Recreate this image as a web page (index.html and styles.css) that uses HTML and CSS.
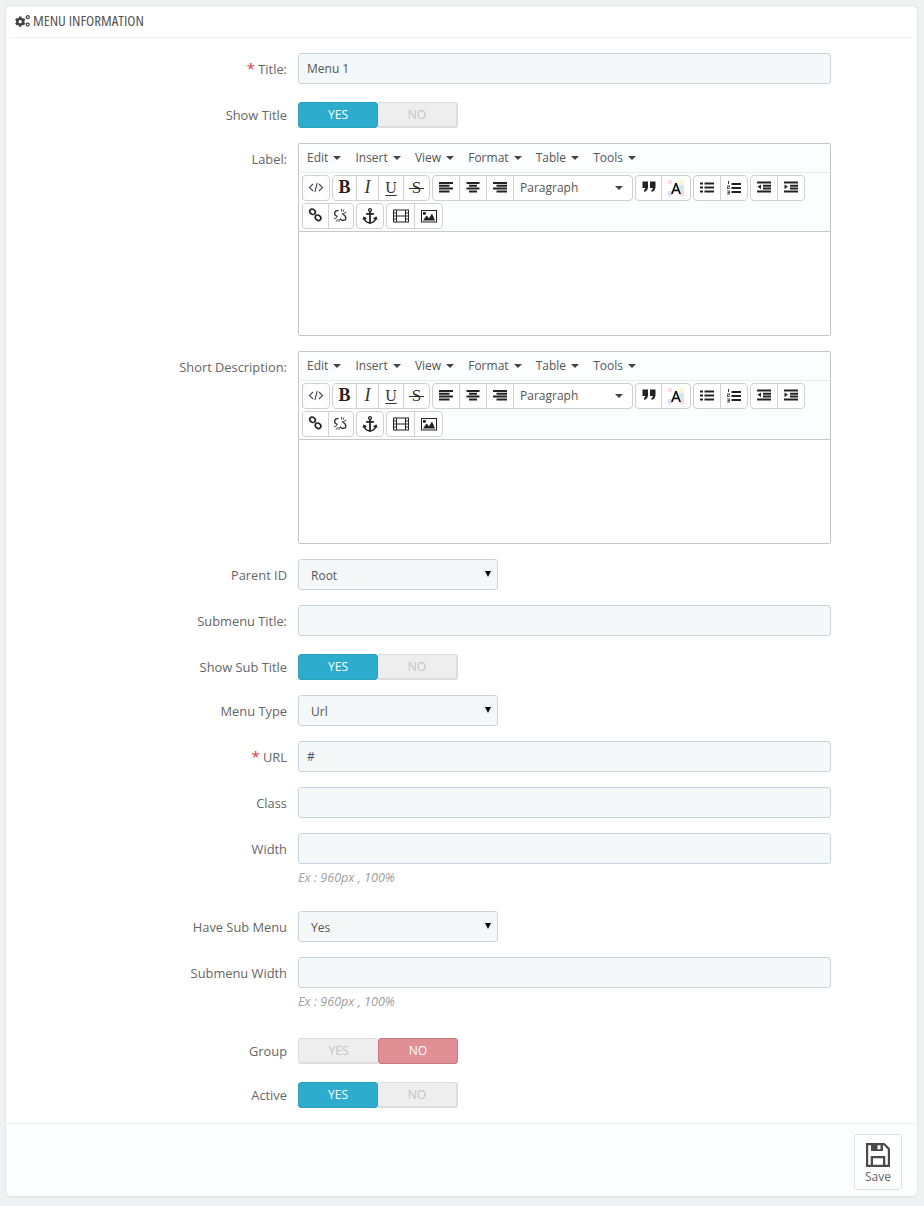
FILE: index.html
```html
<!DOCTYPE html>
<html lang="en">
<head>
<meta charset="utf-8">
<title>Menu Information</title>
<link rel="stylesheet" href="styles.css">
</head>
<body>
<svg class="defs" width="0" height="0" aria-hidden="true">
  <defs>
    <symbol id="i-code" viewBox="0 0 16 16"><path d="M5 4.500 1.500 8 5 11.500M11 4.500 14.500 8 11 11.500M9.200 3.500 6.800 12.500" transform="translate(0 -.5)" fill="none" stroke="#445" stroke-width="1.100"/></symbol>
    <symbol id="i-left" viewBox="0 0 16 16"><path d="M1 2h14v2H1zM1 4.800h10.500v2H1zM1 7.600h14v2H1zM1 10.400h10.500v2H1z" fill="#222"/></symbol>
    <symbol id="i-center" viewBox="0 0 16 16"><path d="M1.500 2h13v2h-13zM4 4.800h8v2H4zM1.500 7.600h13v2h-13zM4 10.400h8v2H4z" fill="#222"/></symbol>
    <symbol id="i-right" viewBox="0 0 16 16"><path d="M1 2h14v2H1zM4.500 4.800H15v2H4.500zM1 7.600h14v2H1zM4.500 10.400H15v2H4.500z" fill="#222"/></symbol>
    <symbol id="i-quote" viewBox="0 0 16 16"><path d="M1.500 1.500h5.500v5.500c0 2.500-1.300 4.300-4 5V9.800c.9-.2 1.300-.9 1.300-1.900H1.500zM9 1.500h5.500v5.500c0 2.500-1.300 4.300-4 5V9.800c.9-.2 1.300-.9 1.300-1.900H9z" fill="#222"/></symbol>
    <symbol id="i-color" viewBox="0 0 16 16"><path d="M0 0h4v4H0z" fill="#fbe0d8"/><path d="M11 0h5v5h-5z" fill="#fdf6c8"/><path d="M11 5h5v6h-5z" fill="#cfe9f8"/><path d="M0 11h4v5H0z" fill="#d4e4f8"/><path d="M11 11h5v5h-5z" fill="#fbd7e3"/><path d="M7.200 3h1.600L13 14h-1.800l-1-2.700H5.800L4.800 14H3z" fill="#111"/><path d="M6.300 9.800h3.400L8 5.300z" fill="#bfe8c8"/></symbol>
    <symbol id="i-ul" viewBox="0 0 16 16"><path d="M5.500 2.500H15v2H5.500zM5.500 6.500H15v2H5.500zM5.500 10.500H15v2H5.500zM1 2.500h3v2H1zM1 6.500h3v2H1zM1 10.500h3v2H1z" fill="#222"/></symbol>
    <symbol id="i-ol" viewBox="0 0 16 16"><path d="M5.500 3H15v2H5.500zM5.500 7H15v2H5.500zM5.500 11H15v2H5.500z" fill="#222"/><path d="M2 1h1v3H2zM1 5.500h2.800V7.300H2v.7h1.800v.8H1V6.700h1.800v-.4H1zM1 10.500h2.800v4H1v-.8h1.800v-.8H1.500v-.8h1.300v-.8H1z" fill="#333"/></symbol>
    <symbol id="i-out" viewBox="0 0 16 16"><path d="M1 1.500h14v2H1zM7 4.700h8v2H7zM7 7.500h8v2H7zM1 10.500h14v2H1zM5 4.500v4.500L1.500 6.800z" fill="#222"/></symbol>
    <symbol id="i-in" viewBox="0 0 16 16"><path d="M1 1.500h14v2H1zM7 4.700h8v2H7zM7 7.500h8v2H7zM1 10.500h14v2H1zM1.500 4.500v4.500L5 6.800z" fill="#222"/></symbol>
    <symbol id="i-link" viewBox="0 0 16 16"><g fill="none" stroke="#222" stroke-width="1.700"><ellipse cx="4.500" cy="3.800" rx="3" ry="2.500" transform="rotate(40 4.500 3.800)"/><ellipse cx="10" cy="9.800" rx="3" ry="2.500" transform="rotate(40 10 9.800)"/></g></symbol>
    <symbol id="i-unlink" viewBox="0 0 16 16"><g fill="none" stroke="#333"><path stroke-width="1.400" d="M5.500 2.500 2.800 2.800 1.500 5l.7 2 2.300 1.700M9 5.500l2.700 2 1.300 2.300-.8 2.200-2.700.5-2.800-1.700"/><path stroke-width=".900" d="M8.500 1v2.500M11 1.500 10 3.800M13.500 4l-3 1.500M6 14v-2.500M3.500 13.500l1-2.300M1 11l3-1.500"/></g></symbol>
    <symbol id="i-anchor" viewBox="0 0 16 16"><path fill-rule="evenodd" d="M8 0a2 2 0 0 1 .9 3.800V5h3v1.700h-3V14c1.800-.2 3-1.200 3.600-2.800L11 10.300l3.500-2 1 4-1.300-.7C13 14 10.800 15.500 8 16c-2.800-.5-5-2-6.200-4.400l-1.300.7 1-4L5 10.300l-1.500.9C4.100 12.800 5.300 13.800 7.100 14V6.700h-3V5h3V3.800A2 2 0 0 1 8 0zm0 1.300a.8.800 0 1 0 0 1.600.8.800 0 0 0 0-1.600z" fill="#222"/></symbol>
    <symbol id="i-film" viewBox="0 0 16 16"><path fill-rule="evenodd" d="M0 1.500h16v13H0zM1 2.500v2h2v-2zM1 5.500v2h2v-2zM1 8.500v2h2v-2zM1 11.500v2h2v-2zM13 2.500v2h2v-2zM13 5.500v2h2v-2zM13 8.500v2h2v-2zM13 11.500v2h2v-2zM4 2.500v5h8v-5zM4 8.500v5h8v-5z" fill="#222"/></symbol>
    <symbol id="i-image" viewBox="0 0 16 16"><path fill-rule="evenodd" d="M0 2h16v12.500H0zM1 3v10.500h14V3z" fill="#222"/><path d="M2 12.500 5.500 7.500l2.500 2.800 3-4.800 3 7zM2 4h2.800v2.800H2z" fill="#222"/></symbol>
    <symbol id="i-gears" viewBox="0 0 15 12"><path fill-rule="evenodd" transform="translate(0 .8)" d="M4 .8h2.400l.3 1.300 1.100.6 1.300-.4 1.200 2-1 .9v1.400l1 .9-1.200 2-1.300-.4-1.100.6-.3 1.300H4l-.3-1.300-1.100-.6-1.300.4-1.200-2 1-.9V5.200l-1-.9 1.200-2 1.300.4 1.100-.6zM5.200 4.300a1.600 1.600 0 1 0 0 3.200 1.600 1.600 0 0 0 0-3.200z" fill="#444"/><g fill="none" stroke="#444" stroke-width="1.300"><circle cx="12.700" cy="2.200" r="1.500"/><circle cx="12.700" cy="9.600" r="1.500"/></g></symbol>
  </defs>
</svg>

<div class="panel">
  <h3 class="panel-heading">
    <svg class="gears" width="15" height="12"><use href="#i-gears"/></svg>
    <span class="heading-text">Menu Information</span>
  </h3>

  <form class="form">
    <div class="row">
      <label class="lbl" for="f-title"><span class="req">*</span> Title:</label>
      <input class="field" id="f-title" type="text" value="Menu 1">
    </div>

    <div class="row row-switch">
      <span class="lbl">Show Title</span>
      <div class="switch"><span class="sw sw-yes">YES</span><span class="sw sw-off sw-off-r">NO</span></div>
    </div>

    <div class="row">
      <span class="lbl">Label:</span>
      <div class="editor">
        <div class="menubar">
          <span class="mi">Edit<i class="caret"></i></span>
          <span class="mi">Insert<i class="caret"></i></span>
          <span class="mi">View<i class="caret"></i></span>
          <span class="mi">Format<i class="caret"></i></span>
          <span class="mi">Table<i class="caret"></i></span>
          <span class="mi">Tools<i class="caret"></i></span>
        </div>
        <div class="toolbar">
          <div class="group"><span class="b b26"><svg class="ic"><use href="#i-code"/></svg></span></div>
          <div class="group">
            <span class="b b24 t t-b">B</span>
            <span class="b b22 t t-i">I</span>
            <span class="b b25 t t-u">U</span>
            <span class="b b25 t t-s">S</span>
          </div>
          <div class="group">
            <span class="b b27"><svg class="ic"><use href="#i-left"/></svg></span>
            <span class="b b27"><svg class="ic"><use href="#i-center"/></svg></span>
            <span class="b b27"><svg class="ic"><use href="#i-right"/></svg></span>
            <span class="b dd">Paragraph<i class="caret caret-dd"></i></span>
          </div>
          <div class="group">
            <span class="b b26"><svg class="ic"><use href="#i-quote"/></svg></span>
            <span class="b b28"><svg class="ic"><use href="#i-color"/></svg></span>
          </div>
          <div class="group">
            <span class="b b27"><svg class="ic"><use href="#i-ul"/></svg></span>
            <span class="b b26"><svg class="ic"><use href="#i-ol"/></svg></span>
          </div>
          <div class="group">
            <span class="b b27"><svg class="ic"><use href="#i-out"/></svg></span>
            <span class="b b26"><svg class="ic"><use href="#i-in"/></svg></span>
          </div>
          <div class="group">
            <span class="b b26"><svg class="ic"><use href="#i-link"/></svg></span>
            <span class="b b24"><svg class="ic"><use href="#i-unlink"/></svg></span>
          </div>
          <div class="group"><span class="b b26"><svg class="ic"><use href="#i-anchor"/></svg></span></div>
          <div class="group">
            <span class="b b28"><svg class="ic"><use href="#i-film"/></svg></span>
            <span class="b b27"><svg class="ic"><use href="#i-image"/></svg></span>
          </div>
        </div>
        <div class="edit-area"></div>
      </div>
    </div>

    <div class="row">
      <span class="lbl">Short Description:</span>
      <div class="editor">
        <div class="menubar">
          <span class="mi">Edit<i class="caret"></i></span>
          <span class="mi">Insert<i class="caret"></i></span>
          <span class="mi">View<i class="caret"></i></span>
          <span class="mi">Format<i class="caret"></i></span>
          <span class="mi">Table<i class="caret"></i></span>
          <span class="mi">Tools<i class="caret"></i></span>
        </div>
        <div class="toolbar">
          <div class="group"><span class="b b26"><svg class="ic"><use href="#i-code"/></svg></span></div>
          <div class="group">
            <span class="b b24 t t-b">B</span>
            <span class="b b22 t t-i">I</span>
            <span class="b b25 t t-u">U</span>
            <span class="b b25 t t-s">S</span>
          </div>
          <div class="group">
            <span class="b b27"><svg class="ic"><use href="#i-left"/></svg></span>
            <span class="b b27"><svg class="ic"><use href="#i-center"/></svg></span>
            <span class="b b27"><svg class="ic"><use href="#i-right"/></svg></span>
            <span class="b dd">Paragraph<i class="caret caret-dd"></i></span>
          </div>
          <div class="group">
            <span class="b b26"><svg class="ic"><use href="#i-quote"/></svg></span>
            <span class="b b28"><svg class="ic"><use href="#i-color"/></svg></span>
          </div>
          <div class="group">
            <span class="b b27"><svg class="ic"><use href="#i-ul"/></svg></span>
            <span class="b b26"><svg class="ic"><use href="#i-ol"/></svg></span>
          </div>
          <div class="group">
            <span class="b b27"><svg class="ic"><use href="#i-out"/></svg></span>
            <span class="b b26"><svg class="ic"><use href="#i-in"/></svg></span>
          </div>
          <div class="group">
            <span class="b b26"><svg class="ic"><use href="#i-link"/></svg></span>
            <span class="b b24"><svg class="ic"><use href="#i-unlink"/></svg></span>
          </div>
          <div class="group"><span class="b b26"><svg class="ic"><use href="#i-anchor"/></svg></span></div>
          <div class="group">
            <span class="b b28"><svg class="ic"><use href="#i-film"/></svg></span>
            <span class="b b27"><svg class="ic"><use href="#i-image"/></svg></span>
          </div>
        </div>
        <div class="edit-area"></div>
      </div>
    </div>

    <div class="row">
      <label class="lbl" for="f-parent">Parent ID</label>
      <div class="select-wrap"><select class="field" id="f-parent"><option>Root</option></select></div>
    </div>

    <div class="row">
      <label class="lbl" for="f-subtitle">Submenu Title:</label>
      <input class="field" id="f-subtitle" type="text">
    </div>

    <div class="row row-switch">
      <span class="lbl">Show Sub Title</span>
      <div class="switch"><span class="sw sw-yes">YES</span><span class="sw sw-off sw-off-r">NO</span></div>
    </div>

    <div class="row">
      <label class="lbl" for="f-type">Menu Type</label>
      <div class="select-wrap"><select class="field" id="f-type"><option>Url</option></select></div>
    </div>

    <div class="row">
      <label class="lbl" for="f-url"><span class="req">*</span> URL</label>
      <input class="field" id="f-url" type="text" value="#">
    </div>

    <div class="row">
      <label class="lbl" for="f-class">Class</label>
      <input class="field" id="f-class" type="text">
    </div>

    <div class="row">
      <label class="lbl" for="f-width">Width</label>
      <div class="col">
        <input class="field" id="f-width" type="text">
        <p class="help">Ex : 960px , 100%</p>
      </div>
    </div>

    <div class="row">
      <label class="lbl" for="f-sub">Have Sub Menu</label>
      <div class="select-wrap"><select class="field" id="f-sub"><option>Yes</option></select></div>
    </div>

    <div class="row">
      <label class="lbl" for="f-subw">Submenu Width</label>
      <div class="col">
        <input class="field" id="f-subw" type="text">
        <p class="help">Ex : 960px , 100%</p>
      </div>
    </div>

    <div class="row row-switch">
      <span class="lbl">Group</span>
      <div class="switch"><span class="sw sw-off sw-off-l">YES</span><span class="sw sw-no">NO</span></div>
    </div>

    <div class="row row-switch">
      <span class="lbl">Active</span>
      <div class="switch"><span class="sw sw-yes">YES</span><span class="sw sw-off sw-off-r">NO</span></div>
    </div>
  </form>

  <div class="panel-footer">
    <button class="save" type="button">
      <svg class="save-ic" width="24" height="24" viewBox="0 0 24 24"><path fill="#4a4a4a" fill-rule="evenodd" d="M0 0h18.500L24 5.500V24H0zM2.200 2.200v19.600h2.500V13h14.600v8.800h2.500V6.500L17.800 2.200H17V8H5V2.200zM7 15.200v6.600h10v-6.600zM11.500 2.200v4h3v-4z"/></svg>
      <span>Save</span>
    </button>
  </div>
</div>
</body>
</html>
```
FILE: styles.css
```css
* { box-sizing: border-box; }
html, body { margin: 0; padding: 0; }
body {
  width: 924px;
  height: 1206px;
  overflow: hidden;
  background: #eff1f2;
  padding: 6px 7px 0 6px;
  font-family: "Open Sans", sans-serif;
  font-size: 12px;
  color: #555;
}
.defs { position: absolute; }
.panel {
  background: #fff;
  border-radius: 5px;
  box-shadow: 0 0 0 1px #e3e5e7, 0 1px 2px rgba(0, 0, 0, .12);
  height: 1190px;
  display: flex;
  flex-direction: column;
}
.panel-heading {
  margin: 0 5px;
  height: 32px;
  display: flex;
  align-items: center;
  gap: 3px;
  padding: 0 0 1px 4px;
  border-bottom: 1px solid #eef0f1;
  font-family: "Open Sans", sans-serif;
  font-stretch: 75%;
  font-weight: 400;
  font-size: 15px;
  color: #555;
  text-transform: uppercase;
}
.heading-text { margin-bottom: 2px; }
.gears { flex: none; }
.form {
  padding: 15px 0 0;
  display: flex;
  flex-direction: column;
  gap: 15px;
  flex: 1;
}
.row {
  display: flex;
  align-items: flex-start;
  gap: 11px;
}
.lbl {
  width: 281px;
  flex: none;
  text-align: right;
  padding-top: 8px;
  line-height: 17px;
  color: #666;
  font-size: 12.850px;
}
.row-switch { padding-top: 3px; }
.row-switch .lbl { padding-top: 5px; }
.req { color: #e0393e; font-size: 15px; line-height: 10px; }
.field {
  display: block;
  width: 533px;
  height: 31px;
  border: 1px solid #c7d6db;
  border-radius: 3px;
  background: #f5f8f9;
  padding: 0 8px;
  font: 12px "Open Sans", sans-serif;
  color: #555;
  outline: none;
}
.col { display: flex; flex-direction: column; width: 533px; }
.help {
  margin: 0;
  height: 32px;
  padding-top: 5px;
  line-height: 17px;
  font-size: 12.600px;
  font-style: italic;
  color: #a0a0a0;
}
.select-wrap { position: relative; width: 200px; }
.select-wrap::after {
  content: "";
  position: absolute;
  left: 187px;
  top: 12px;
  border-left: 3.500px solid transparent;
  border-right: 3.500px solid transparent;
  border-top: 6px solid #000;
  pointer-events: none;
}
select.field {
  width: 200px;
  appearance: none;
  padding: 2px 0 0 12px;
}
.switch {
  display: flex;
  width: 160px;
  height: 26px;
}
.sw {
  width: 80px;
  height: 26px;
  display: flex;
  align-items: center;
  justify-content: center;
  padding-bottom: 2px;
  font-size: 12px;
  font-weight: 500;
  border: 1px solid transparent;
}
.sw-yes { background: #2eacce; border-color: #2aa0bf; color: #fff; border-radius: 3px; }
.sw-no { background: #e08f95; border-color: #c97a80; color: #fff; border-radius: 3px; }
.sw-off { background: #eee; color: #c4c4c4; border-color: #ddd; padding-bottom: 0; }
.sw-off-r { border-left: 0; border-radius: 0 3px 3px 0; border-width: 1px 2px 2px 0; }
.sw-off-l { border-right: 0; border-radius: 3px 0 0 3px; border-width: 1px 0 2px 1px; }
.editor {
  width: 533px;
  height: 193px;
  border: 1px solid #c5c5c5;
  border-radius: 2px;
  background: #fff;
  display: flex;
  flex-direction: column;
}
.menubar {
  height: 29px;
  background: #fcfdff;
  border-bottom: 1px solid #eaebec;
  display: flex;
  align-items: center;
  gap: 14.100px;
  padding: 0 0 1px 8px;
}
.mi { display: flex; align-items: center; color: #555; font-size: 12px; }
.caret {
  display: block;
  margin-left: 5px;
  margin-top: 1px;
  border-left: 4px solid transparent;
  border-right: 4px solid transparent;
  border-top: 4px solid #444;
}
.toolbar {
  height: 59px;
  background: #fcfdff;
  border-bottom: 1px solid #c9c9c9;
  display: flex;
  flex-wrap: wrap;
  align-content: flex-start;
  gap: 2px;
  padding: 2px 3px 0;
}
.group {
  display: flex;
  height: 26px;
  background: #fff;
  border: 1px solid #d0d0d0;
  border-radius: 4px;
}
.b {
  display: flex;
  align-items: center;
  justify-content: center;
  height: 24px;
  border-right: 1px solid #d0d0d0;
  flex: none;
}
.b:last-child { border-right: 0; }
.ic { width: 16px; height: 16px; display: block; }
.b22 { width: 22px; }
.b24 { width: 24px; }
.b25 { width: 25px; }
.b26 { width: 26px; }
.b27 { width: 27px; }
.b28 { width: 28px; }
.t {
  font-family: "Liberation Serif", serif;
  font-size: 17px;
  color: #333;
  padding-bottom: 1px;
}
.t-b { font-weight: 700; font-size: 18px; color: #222; }
.t-i { font-style: italic; font-size: 18px; }
.t-u { text-decoration: underline; text-underline-offset: 2px; font-size: 16px; }
.t-s { position: relative; font-size: 17px; }
.t-s::after {
  content: "";
  position: absolute;
  left: 5px;
  right: 5px;
  top: 12px;
  height: 1px;
  background: #333;
}
.dd {
  width: 118px;
  justify-content: space-between;
  padding: 0 9px 2px 6px;
  font-size: 12px;
  color: #555;
}
.caret-dd { margin: 1px 0 0; }
.edit-area { flex: 1; background: #fff; }
.panel-footer {
  height: 73px;
  background: #fcfdfe;
  border-top: 1px solid #eef0f1;
  border-radius: 0 0 5px 5px;
  display: flex;
  justify-content: flex-end;
  padding: 10px 15px 0 0;
}
.save {
  width: 48px;
  height: 56px;
  background: #fff;
  border: 1px solid #dfe2e4;
  border-radius: 3px;
  padding: 8px 0 0;
  display: flex;
  flex-direction: column;
  align-items: center;
  gap: 1px;
  font: 12px/18px "Open Sans", sans-serif;
  color: #666;
}
.save-ic { display: block; }
```
